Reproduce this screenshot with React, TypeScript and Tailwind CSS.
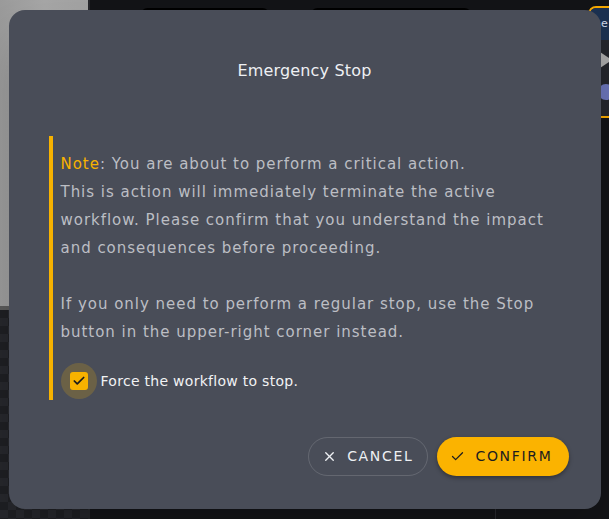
import React, { useState } from 'react';
import { Check, X } from 'lucide-react';

const font = { fontFamily: '"DejaVu Sans", "Open Sans", sans-serif' };

const Backdrop: React.FC = () => (
    <div className="flex h-full w-full">
        {/* Left tool column */}
        <div className="flex w-[90px] flex-col border-r-2 border-[#26272b]">
            <div className="h-[310px] bg-gradient-to-r from-[#9a9a9a] via-[#a6a6a6] to-[#a2a2a2] border-b-4 border-[#5a5a5a]"></div>
            <div className="flex-1 bg-[#1e1f23] bg-[linear-gradient(45deg,#26272c_25%,transparent_25%,transparent_75%,#26272c_75%),linear-gradient(45deg,#26272c_25%,transparent_25%,transparent_75%,#26272c_75%)] bg-[length:16px_16px] bg-[position:0_0,8px_8px]"></div>
        </div>
        {/* Canvas */}
        <div className="relative flex-1 bg-[#131417]">
            <div className="flex gap-10 pl-[50px] pt-2">
                <div className="h-6 w-[130px] rounded-lg bg-black"></div>
                <div className="h-6 w-[162px] rounded-lg bg-black"></div>
            </div>
            <div className="absolute left-[498px] top-[6px] h-[112px] w-[60px] overflow-hidden rounded-lg border-2 border-[#f5a800] bg-[#24262c]">
                <div className="h-8 bg-[#1c3150] pl-[11px] pt-[8px] text-[11px] text-[#cfd8e6]" style={font}>e</div>
                <div className="ml-[10px] mt-3 h-0 w-0 border-y-[8px] border-l-[12px] border-y-transparent border-l-[#a8a8a8]"></div>
                <div className="ml-[8px] mt-4 h-4 w-4 rounded-full bg-[#6a74b8]"></div>
            </div>
            <div className="absolute bottom-0 left-[405px] top-[470px] w-px bg-[#2a2b30]"></div>
        </div>
    </div>
);

const EmergencyStopDialog: React.FC = () => {
    const [force, setForce] = useState(true);

    return (
        <div className="w-[592px] rounded-2xl bg-[#494d58] shadow-2xl" style={font}>
            <h2 className="pt-[47px] text-center text-[16px] leading-7 tracking-[0.01em] text-[#eef0f3]">Emergency Stop</h2>

            <div className="mt-[51px] px-10">
                <div className="border-l-4 border-[#f7b200] pb-px pl-2 pt-[14px] text-[15px] leading-7 tracking-[0.065em] text-[#bcbec4]">
                    <p>
                        <span className="text-[#f7b200]">Note</span>: You are about to perform a critical action.
                        <br />
                        This is action will immediately terminate the active workflow. Please confirm that you understand the impact and consequences before proceeding.
                    </p>
                    <p className="mt-7">
                        If you only need to perform a regular stop, use the Stop button in the upper-right corner instead.
                    </p>

                    <label className="mt-[17px] flex cursor-pointer items-center gap-1 tracking-normal">
                        <span className="flex h-9 w-9 items-center justify-center rounded-full bg-[#f7b200]/20">
                            <button
                                onClick={() => setForce(f => !f)}
                                className={`flex h-[18px] w-[18px] items-center justify-center rounded-[3px] ${force ? 'bg-[#f7b200]' : 'border-2 border-[#bcbec4]'}`}
                            >
                                {force && <Check size={14} strokeWidth={3} className="text-[#1b1b1b]" />}
                            </button>
                        </span>
                        <span className="text-[14px] tracking-[0.02em] text-[#f1f2f4]">Force the workflow to stop.</span>
                    </label>
                </div>
            </div>

            <div className="flex justify-end gap-[9px] px-8 pb-[33px] pt-[37px]">
                <button className="flex h-[39px] items-center gap-[10px] rounded-full border border-white/15 pl-[13px] pr-[14px] text-[14px] font-medium tracking-[0.12em] text-[#eef0f3]">
                    <X size={15} strokeWidth={2.2} />
                    CANCEL
                </button>
                <button className="flex h-[39px] items-center gap-[10px] rounded-full bg-[#fbb300] pl-[13px] pr-[16px] text-[14px] font-medium tracking-[0.12em] text-[#1d1d1f] shadow-[0_2px_4px_rgba(0,0,0,0.35)]">
                    <Check size={15} strokeWidth={2} />
                    CONFIRM
                </button>
            </div>
        </div>
    );
};

export default function App() {
    return (
        <div className="relative h-[519px] w-[609px] overflow-hidden">
            <Backdrop />
            <div className="absolute inset-0 flex items-center justify-center">
                <EmergencyStopDialog />
            </div>
        </div>
    );
}
